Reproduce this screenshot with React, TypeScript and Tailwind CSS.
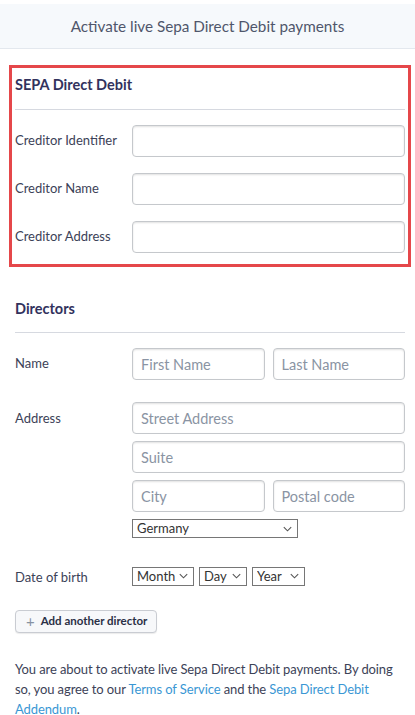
import React from 'react'

const font = { fontFamily: 'Lato, "Open Sans", sans-serif' }

function TextInput({ placeholder, className = '' }: { placeholder?: string; className?: string }) {
  return (
    <input
      type="text"
      placeholder={placeholder}
      className={`block h-[32px] rounded-[4px] border border-[#c5c8cc] bg-white px-[8px] text-[14.5px] text-[#32325d] shadow-[inset_0_1px_2px_rgba(0,0,0,0.12)] outline-none placeholder:text-[#8a94a3] ${className}`}
    />
  )
}

function Chevron() {
  return (
    <svg width="9" height="6" viewBox="0 0 9 6" className="pointer-events-none absolute right-[6px] top-1/2 -translate-y-1/2">
      <path d="M0.8 1.2 L4.5 4.8 L8.2 1.2" fill="none" stroke="#555" strokeWidth="1.1" />
    </svg>
  )
}

function Select({ label, width }: { label: string; width: string }) {
  return (
    <div className={`relative ${width}`}>
      <select className="block h-[19px] w-full appearance-none border border-[#767676] bg-white pl-[4px] text-[13px] leading-[17px] text-[#333]">
        <option>{label}</option>
      </select>
      <Chevron />
    </div>
  )
}

const labelCls = 'w-[117px] shrink-0 text-[13px] text-[#3c4257]'

export default function App() {
  return (
    <div className="h-screen w-full overflow-hidden bg-white" style={font}>
      <div className="pt-[4px]">
        <div className="flex h-[45px] items-center justify-center border-b border-[#e3e8ee] bg-[#f6f9fc] text-[15.25px] text-[#4f566b]">
          Activate live Sepa Direct Debit payments
        </div>
      </div>

      <div className="pl-[15px] pr-[10px] pt-[16px]">
        {/* SEPA block */}
        <div className="-mx-[6px] border-[3px] border-[#e5474a] px-[3px] pb-[11px] pt-[7px]">
          <div className="text-[14.5px] font-bold leading-[20px] text-[#32325d]">SEPA Direct Debit</div>
          <div className="mt-[14px] h-px bg-[#d6d9e0]" />
          <div className="mt-[15px] flex flex-col gap-[16px]">
            {['Creditor Identifier', 'Creditor Name', 'Creditor Address'].map((l) => (
              <div key={l} className="flex items-center">
                <div className={labelCls}>{l}</div>
                <TextInput className="w-0 flex-1" />
              </div>
            ))}
          </div>
        </div>

        {/* Directors */}
        <div className="mt-[32px] text-[14.5px] font-bold leading-[20px] text-[#32325d]">Directors</div>
        <div className="mt-[13px] h-px bg-[#d6d9e0]" />

        <div className="mt-[15px] flex items-center">
          <div className={labelCls}>Name</div>
          <div className="flex flex-1 gap-[8px]">
            <TextInput placeholder="First Name" className="w-0 flex-1" />
            <TextInput placeholder="Last Name" className="w-0 flex-1" />
          </div>
        </div>

        <div className="mt-[22px] flex">
          <div className={`${labelCls} pt-[7px]`}>Address</div>
          <div className="flex flex-1 flex-col gap-[7px]">
            <TextInput placeholder="Street Address" className="w-full" />
            <TextInput placeholder="Suite" className="w-full" />
            <div className="flex gap-[8px]">
              <TextInput placeholder="City" className="w-0 flex-1" />
              <TextInput placeholder="Postal code" className="w-0 flex-1" />
            </div>
            <Select label="Germany" width="w-[166px]" />
          </div>
        </div>

        <div className="mt-[27px] flex items-center">
          <div className={`${labelCls} pt-[3px]`}>Date of birth</div>
          <div className="flex gap-[5px]">
            <Select label="Month" width="w-[62px]" />
            <Select label="Day" width="w-[48px]" />
            <Select label="Year" width="w-[53px]" />
          </div>
        </div>

        <button className="mt-[22px] flex h-[23px] items-center gap-[6px] rounded-[4px] border border-[#c9ccd2] bg-[#f7f8fa] pl-[10px] pr-[9px] text-[11.5px] font-bold text-[#2a2f45] shadow-[0_1px_1px_rgba(0,0,0,0.08)]">
          <span className="text-[15px] font-normal leading-none text-[#8792a2]">+</span>
          Add another director
        </button>

        <p className="mt-[26px] text-[13px] leading-[20px] tracking-[-0.1px] text-[#3c4257]">
          You are about to activate live Sepa Direct Debit payments. By doing so, you agree to our{' '}
          <a className="text-[#3a97d4]">Terms of Service</a> and the{' '}
          <a className="text-[#3a97d4]">Sepa Direct Debit Addendum</a>.
        </p>
      </div>
    </div>
  )
}
